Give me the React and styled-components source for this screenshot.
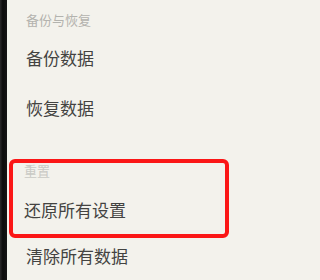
import React from "react";
import styled, { createGlobalStyle } from "styled-components";

const Global = createGlobalStyle`
  html, body {
    margin: 0;
    padding: 0;
    width: 240px;
    height: 280px;
    overflow: hidden;
    background: #f3f2ec;
  }
  #root { height: 280px; }
`;

const Screen = styled.div`
  display: flex;
  width: 240px;
  height: 280px;
  background: #f3f2ec;
  font-family: "Noto Sans CJK SC", "Noto Sans", sans-serif;
  overflow: hidden;
`;

const Edge = styled.div`
  flex: 0 0 7px;
  background: linear-gradient(90deg, #2a2a2a 0%, #0c0c0c 40%, #151515 100%);
`;

const Content = styled.div`
  flex: 1;
  display: flex;
  flex-direction: column;
`;

const SectionTitle = styled.div`
  padding-left: ${(p) => p.$indent}px;
  padding-top: ${(p) => p.$top || 0}px;
  padding-bottom: ${(p) => p.$bottom || 0}px;
  font-size: 13px;
  line-height: ${(p) => p.$lh}px;
  color: ${(p) => (p.$faint ? "#c9c9c4" : "#b3b3ae")};
`;

const Item = styled.div`
  display: flex;
  align-items: center;
  height: ${(p) => p.$h || 50}px;
  padding-left: ${(p) => p.$indent}px;
  font-size: 17px;
  color: #434341;
`;

const Highlight = styled.div`
  display: flex;
  flex-direction: column;
  margin: 27px 11px 0 2px;
  border: 4.5px solid #fb1616;
  border-radius: 6px;
`;

export default function App() {
  return (
    <>
      <Global />
      <Screen>
        <Edge />
        <Content>
          <SectionTitle $indent={19} $top={8} $lh={24}>备份与恢复</SectionTitle>
          <Item $indent={19}>备份数据</Item>
          <Item $indent={19}>恢复数据</Item>
          <Highlight>
            <SectionTitle $indent={11} $lh={16} $bottom={5} $faint>重置</SectionTitle>
            <Item $indent={11}>还原所有设置</Item>
          </Highlight>
          <Item $indent={19} $h={34}>清除所有数据</Item>
        </Content>
      </Screen>
    </>
  );
}
